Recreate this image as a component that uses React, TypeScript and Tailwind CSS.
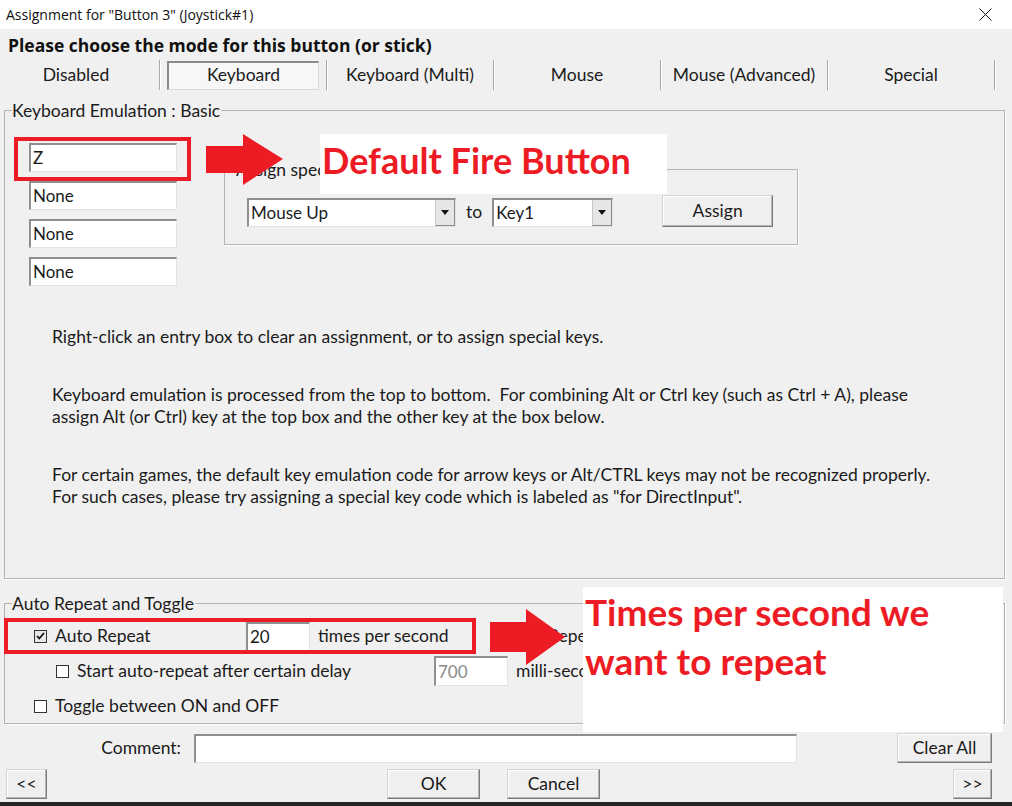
import React from "react";

const tabs = ["Disabled", "Keyboard", "Keyboard (Multi)", "Mouse", "Mouse (Advanced)", "Special"];

const paragraphs = [
  ["Right-click an entry box to clear an assignment, or to assign special keys."],
  [
    "Keyboard emulation is processed from the top to bottom.  For combining Alt or Ctrl key (such as Ctrl + A), please",
    "assign Alt (or Ctrl) key at the top box and the other key at the box below.",
  ],
  [
    "For certain games, the default key emulation code for arrow keys or Alt/CTRL keys may not be recognized properly.",
    "For such cases, please try assigning a special key code which is labeled as \"for DirectInput\".",
  ],
];

const sunken =
  "bg-white border-t-2 border-l-2 border-r border-b border-t-[#8f8f8f] border-l-[#8f8f8f] border-r-[#e3e3e3] border-b-[#e3e3e3]";
const raised =
  "bg-[#efefef] border border-t-[#d4d4d4] border-l-[#d4d4d4] border-r-[#7a7a7a] border-b-[#7a7a7a] shadow-[inset_-1px_-1px_0_#b5b5b5,inset_1px_1px_0_#ffffff] flex items-center justify-center";

const Entry: React.FC<{ value: string; className?: string; muted?: boolean }> = ({ value, className, muted }) => (
  <div className={`${sunken} h-[29px] flex items-center pl-[2px] text-[17px] ${muted ? "text-[#8a8a8a]" : ""} ${className ?? ""}`}>
    {value}
  </div>
);

const Select: React.FC<{ value: string; className: string }> = ({ value, className }) => (
  <div className={`${sunken} h-[29px] flex items-center justify-between ${className}`}>
    <span className="pl-[2px] text-[17px]">{value}</span>
    <div className="w-[20px] h-full bg-[#e6e6e6] border-l border-[#c8c8c8] border-r border-b border-r-[#8a8a8a] border-b-[#8a8a8a] flex items-center justify-center">
      <svg width="8" height="5" viewBox="0 0 8 5">
        <path d="M0 0 L8 0 L4 5 Z" fill="#111" />
      </svg>
    </div>
  </div>
);

const Check: React.FC<{ checked?: boolean }> = ({ checked }) => (
  <div className={`w-[13px] h-[13px] border border-[#333] flex items-center justify-center ${checked ? "bg-[#e8e8e8]" : "bg-white"}`}>
    {checked && (
      <svg width="9" height="8" viewBox="0 0 9 8">
        <path d="M1 4 L3.3 6.5 L8 1" stroke="#111" strokeWidth="1.8" fill="none" />
      </svg>
    )}
  </div>
);

const Arrow: React.FC<{ className: string; w: number; h: number; d: string }> = ({ className, w, h, d }) => (
  <svg className={`absolute ${className}`} width={w} height={h} viewBox={`0 0 ${w} ${h}`}>
    <path d={d} fill="#ed1c24" />
  </svg>
);

const App: React.FC = () => {
  return (
    <div className="relative w-[1012px] h-[806px] overflow-hidden bg-[#f0f0f0] font-['Lato',sans-serif] text-[#1b1b1b]">
      {/* title bar */}
      <div className="h-[29px] bg-white flex items-center justify-between pl-[6px] pr-[20px]">
        <span className="text-[14px] font-['Open_Sans',sans-serif] text-[#111]">Assignment for "Button 3" (Joystick#1)</span>
        <svg width="13" height="13" viewBox="0 0 13 13">
          <path d="M0.5 0.5 L12.5 12.5 M12.5 0.5 L0.5 12.5" stroke="#111" strokeWidth="1" />
        </svg>
      </div>

      <div className="pl-[8px] pt-[5px] h-[25px] text-[17.5px] leading-[22px] font-bold font-['Open_Sans',sans-serif] text-[#111]">
        Please choose the mode for this button (or stick)
      </div>

      {/* mode tabs */}
      <div className="mt-[6px] -ml-[7px] flex h-[30px]">
        {tabs.map((t) => (
          <div key={t} className="w-[167px] h-full flex items-center justify-center border-r border-[#a8a8a8] shadow-[1px_0_0_#ffffff] text-[17.5px]">
            {t === "Keyboard" ? (
              <div className="w-[152px] h-[29px] flex items-center justify-center bg-[#f7f7f7] border-t-2 border-l-2 border-r border-b border-t-[#8a8a8a] border-l-[#8a8a8a] border-r-[#d9d9d9] border-b-[#d9d9d9]">
                {t}
              </div>
            ) : (
              t
            )}
          </div>
        ))}
      </div>

      {/* keyboard emulation group */}
      <div className="mt-[20px] mx-[4px] w-[1001px] h-[469px] border border-[#b4b4b4] shadow-[1px_1px_0_#ffffff]">
        <div className="-mt-[11px] ml-[7px] w-fit pr-[1px] bg-[#f0f0f0] text-[17.5px] leading-[22px]">Keyboard Emulation : Basic</div>
        <div className="flex">
          <div className="ml-[24px] mt-[21px] flex flex-col gap-[9px]">
            <Entry value="Z" className="w-[148px]" />
            <Entry value="None" className="w-[148px]" />
            <Entry value="None" className="w-[148px]" />
            <Entry value="None" className="w-[148px]" />
          </div>
          <div className="ml-[47px] mt-[47px] w-[574px] h-[76px] border border-[#b4b4b4] shadow-[1px_1px_0_#ffffff]">
            <div className="-mt-[11px] ml-[11px] w-fit bg-[#f0f0f0] text-[17.5px] leading-[22px]">Assign special function</div>
            <div className="mt-[17px] ml-[22px] flex items-center">
              <Select value="Mouse Up" className="w-[209px]" />
              <span className="mx-[10px] text-[17.5px]">to</span>
              <Select value="Key1" className="w-[121px]" />
              <div className={`${raised} ml-[49px] -mt-[3px] w-[111px] h-[32px] text-[17.5px]`}>Assign</div>
            </div>
          </div>
        </div>
        <div className="ml-[47px] mt-[40px] flex flex-col gap-[36px] text-[17.5px] leading-[22px]">
          {paragraphs.map((p, i) => (
            <div key={i}>
              {p.map((line) => (
                <div key={line} className="whitespace-pre">{line}</div>
              ))}
            </div>
          ))}
        </div>
      </div>

      {/* auto repeat group */}
      <div className="mt-[24px] mx-[4px] w-[1001px] h-[121px] border border-[#b4b4b4] shadow-[1px_1px_0_#ffffff] text-[17.5px]">
        <div className="-mt-[11px] ml-[7px] w-fit pr-[1px] bg-[#f0f0f0] leading-[22px]">Auto Repeat and Toggle</div>
        <div className="mt-[7px] h-[28px] flex items-center">
          <div className="ml-[29px]"><Check checked /></div>
          <span className="ml-[8px] w-[191px]">Auto Repeat</span>
          <Entry value="20" className="w-[64px] h-[28px]" />
          <span className="ml-[8px] w-[230px]">times per second</span>
          <span>Repeat</span>
        </div>
        <div className="mt-[6px] h-[30px] flex items-center">
          <div className="ml-[51px]"><Check /></div>
          <span className="ml-[8px] w-[357px]">Start auto-repeat after certain delay</span>
          <Entry value="700" muted className="w-[74px] h-[30px]" />
          <span className="ml-[8px]">milli-seconds</span>
        </div>
        <div className="mt-[9px] h-[22px] flex items-center">
          <div className="ml-[29px]"><Check /></div>
          <span className="ml-[8px]">Toggle between ON and OFF</span>
        </div>
      </div>

      {/* comment row */}
      <div className="mt-[9px] flex items-center h-[30px] text-[17.5px]">
        <span className="w-[181px] text-right">Comment:</span>
        <div className={`${sunken} ml-[13px] w-[603px] h-[29px]`} />
        <div className={`${raised} ml-[100px] w-[95px] h-[30px]`}>Clear All</div>
      </div>

      {/* bottom buttons */}
      <div className="mt-[6px] pl-[6px] flex h-[30px] text-[17.5px]">
        <div className={`${raised} w-[41px] h-full`}>&lt;&lt;</div>
        <div className={`${raised} ml-[340px] w-[93px] h-full`}>OK</div>
        <div className={`${raised} ml-[27px] w-[93px] h-full`}>Cancel</div>
        <div className={`${raised} ml-[353px] w-[39px] h-full`}>&gt;&gt;</div>
      </div>
      <div className="mt-[3px] h-[5px] bg-[#262626]" />

      {/* annotations */}
      <div className="absolute left-[14px] top-[137px] w-[177px] h-[44px] border-[4px] border-[#ed1c24]" />
      <Arrow className="left-[206px] top-[133px]" w={78} h={54} d="M0 13 L37 13 L37 1 L77 26 L37 52 L37 40 L0 40 Z" />
      <div className="absolute left-[320px] top-[134px] w-[347px] h-[60px] bg-white pl-[2px] pb-[8px] flex items-center text-[#ed1c24] font-bold text-[36px]">
        Default Fire Button
      </div>

      <div className="absolute left-[4px] top-[618px] w-[472px] h-[36px] border-[4px] border-[#ed1c24]" />
      <Arrow className="left-[490px] top-[608px]" w={76} h={58} d="M0 14 L36 14 L36 1 L75 29 L36 57 L36 44 L0 44 Z" />
      <div className="absolute left-[583px] top-[587px] w-[420px] h-[145px] bg-white pl-[2px] text-[#ed1c24] font-bold text-[37px] leading-[49px]">
        Times per second we
        <br />
        want to repeat
      </div>
    </div>
  );
};

export default App;
